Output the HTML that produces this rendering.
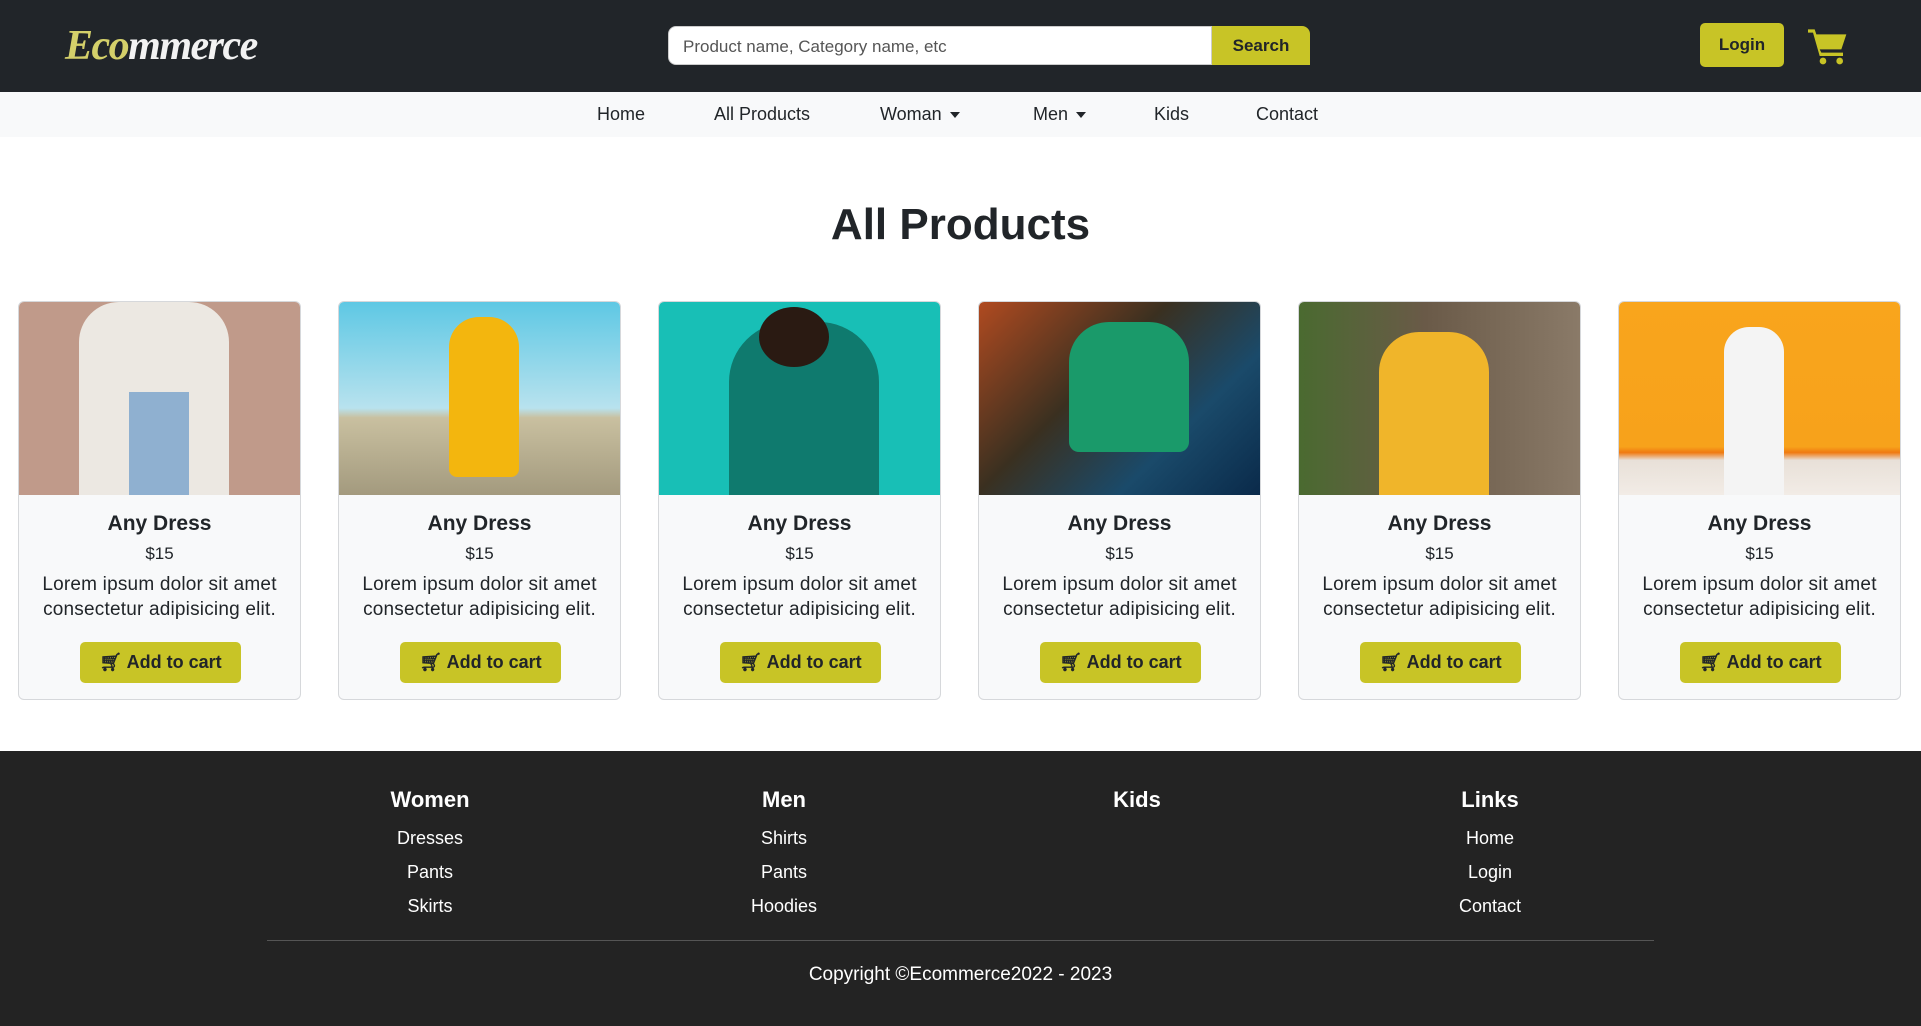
<!DOCTYPE html>
<html><head><meta charset="utf-8"><style>
*{margin:0;padding:0;box-sizing:border-box}
body{width:1921px;height:1026px;overflow:hidden;font-family:"Liberation Sans",sans-serif;background:#fff;color:#212529;position:relative}
.hdr{position:absolute;left:0;top:0;width:1921px;height:92px;background:#212529}
.logo{position:absolute;left:65px;top:22px;font-family:"Liberation Serif",serif;font-style:italic;font-weight:bold;font-size:42px;color:#d4d06a;letter-spacing:-1.5px}
.logo span{color:#f2f2f2}
.search{position:absolute;left:668px;top:26px;width:544px;height:39px;background:#fff;border-radius:8px 0 0 8px;border:1px solid #ccc;font-size:17px;color:#555;padding:10px 14px}
.sbtn{position:absolute;left:1212px;top:26px;width:98px;height:39px;background:#c8c426;border-radius:0 8px 0 0;font-weight:bold;font-size:17px;text-align:center;line-height:39px;color:#212529}
.login{position:absolute;left:1700px;top:23px;width:84px;height:44px;background:#c8c426;border-radius:5px;font-weight:bold;font-size:17px;text-align:center;line-height:44px;color:#212529}
.cart{position:absolute;left:1808px;top:27px}
.nav{position:absolute;left:0;top:92px;width:1921px;height:45px;background:#f8f9fa;font-size:18px}
.nav div{position:absolute;top:12px}
.caret{display:inline-block;width:0;height:0;border-left:5px solid transparent;border-right:5px solid transparent;border-top:6px solid #212529;vertical-align:middle;margin-left:8px}
h1{position:absolute;left:0;width:1921px;top:200px;text-align:center;font-size:44px;font-weight:bold}
.card{position:absolute;top:301px;width:283px;height:399px;background:#f8f9fa;border:1px solid #d6d8db;border-radius:6px;overflow:hidden;text-align:center}
.img{height:193px;position:relative;overflow:hidden}
.t{margin-top:16px;font-size:21px;font-weight:bold;line-height:26px}
.p{margin-top:7px;font-size:17px;line-height:20px}
.d{margin-top:8px;font-size:19px;line-height:25px;letter-spacing:0.2px}
.btn{position:absolute;left:61px;top:340px;width:161px;height:41px;background:#c8c426;border-radius:5px;font-weight:bold;font-size:18px;line-height:41px;color:#212529}
.ft{position:absolute;left:0;top:751px;width:1921px;height:275px;background:#232323;color:#fff}
.col{position:absolute;top:36px;width:200px;margin-left:-100px;text-align:center}
.col b{display:block;font-size:22px;height:41px}
.col div{font-size:18px;height:34px}
.hr{position:absolute;left:267px;top:189px;width:1387px;height:1px;background:#555}
.cp{position:absolute;left:0;width:1921px;top:213px;text-align:center;font-size:19px}
</style></head><body>
<div class="hdr">
<div class="logo">Eco<span>mmerce</span></div>
<div class="search">Product name, Category name, etc</div>
<div class="sbtn">Search</div>
<div class="login">Login</div>
<svg class="cart" width="40" height="38" viewBox="0 0 24 22"><path d="M0 1h4l1 3h18l-3 9H7l1 2h13v2H7L3 3H0z" fill="#c8c426"/><circle cx="9" cy="20" r="2" fill="#c8c426"/><circle cx="19" cy="20" r="2" fill="#c8c426"/></svg>
</div>
<div class="nav">
<div style="left:597px">Home</div>
<div style="left:714px">All Products</div>
<div style="left:880px">Woman<span class="caret"></span></div>
<div style="left:1033px">Men<span class="caret"></span></div>
<div style="left:1154px">Kids</div>
<div style="left:1256px">Contact</div>
</div>
<h1>All Products</h1>

<div class="card" style="left:18px"><div class="img" style="background:#c09a8a"><div style="position:absolute;left:60px;top:0;width:150px;height:193px;background:#ece8e2;border-radius:40px 40px 0 0"></div><div style="position:absolute;left:110px;top:90px;width:60px;height:103px;background:#8fb0d0"></div></div>
<div class="t">Any Dress</div><div class="p">$15</div><div class="d">Lorem ipsum dolor sit amet<br>consectetur adipisicing elit.</div>
<div class="btn">🛒&#xFE0E; Add to cart</div></div>

<div class="card" style="left:338px"><div class="img" style="background:linear-gradient(#5ec8e4 0%,#b8e2ee 55%,#c9c0a0 60%,#a39a7e 100%)"><div style="position:absolute;left:110px;top:15px;width:70px;height:160px;background:#f3b60e;border-radius:30px 30px 8px 8px"></div></div>
<div class="t">Any Dress</div><div class="p">$15</div><div class="d">Lorem ipsum dolor sit amet<br>consectetur adipisicing elit.</div>
<div class="btn">🛒&#xFE0E; Add to cart</div></div>

<div class="card" style="left:658px"><div class="img" style="background:#18bfb6"><div style="position:absolute;left:70px;top:20px;width:150px;height:173px;background:#0f7a6e;border-radius:60px 60px 0 0"></div><div style="position:absolute;left:100px;top:5px;width:70px;height:60px;background:#2a1a12;border-radius:50%"></div></div>
<div class="t">Any Dress</div><div class="p">$15</div><div class="d">Lorem ipsum dolor sit amet<br>consectetur adipisicing elit.</div>
<div class="btn">🛒&#xFE0E; Add to cart</div></div>

<div class="card" style="left:978px"><div class="img" style="background:linear-gradient(135deg,#b04a20 0%,#3a3020 40%,#1a4a6a 70%,#0a2a4a 100%)"><div style="position:absolute;left:90px;top:20px;width:120px;height:130px;background:#1a9a6a;border-radius:40px 40px 10px 10px"></div></div>
<div class="t">Any Dress</div><div class="p">$15</div><div class="d">Lorem ipsum dolor sit amet<br>consectetur adipisicing elit.</div>
<div class="btn">🛒&#xFE0E; Add to cart</div></div>

<div class="card" style="left:1298px"><div class="img" style="background:linear-gradient(90deg,#4a6a30 0%,#6a5a48 45%,#8a7a68 100%)"><div style="position:absolute;left:80px;top:30px;width:110px;height:163px;background:#f0b52a;border-radius:40px 40px 0 0"></div></div>
<div class="t">Any Dress</div><div class="p">$15</div><div class="d">Lorem ipsum dolor sit amet<br>consectetur adipisicing elit.</div>
<div class="btn">🛒&#xFE0E; Add to cart</div></div>

<div class="card" style="left:1618px"><div class="img" style="background:linear-gradient(#f9a51c 0%,#f7a21b 75%,#f07a10 78%,#e8e0d8 82%,#f2ece6 100%)"><div style="position:absolute;left:105px;top:25px;width:60px;height:168px;background:#f4f4f4;border-radius:25px 25px 0 0"></div></div>
<div class="t">Any Dress</div><div class="p">$15</div><div class="d">Lorem ipsum dolor sit amet<br>consectetur adipisicing elit.</div>
<div class="btn">🛒&#xFE0E; Add to cart</div></div>

<div class="ft">
<div class="col" style="left:430px"><b>Women</b><div>Dresses</div><div>Pants</div><div>Skirts</div></div>
<div class="col" style="left:784px"><b>Men</b><div>Shirts</div><div>Pants</div><div>Hoodies</div></div>
<div class="col" style="left:1137px"><b>Kids</b></div>
<div class="col" style="left:1490px"><b>Links</b><div>Home</div><div>Login</div><div>Contact</div></div>
<div class="hr"></div>
<div class="cp">Copyright ©Ecommerce2022 - 2023</div>
</div>
</body></html>
